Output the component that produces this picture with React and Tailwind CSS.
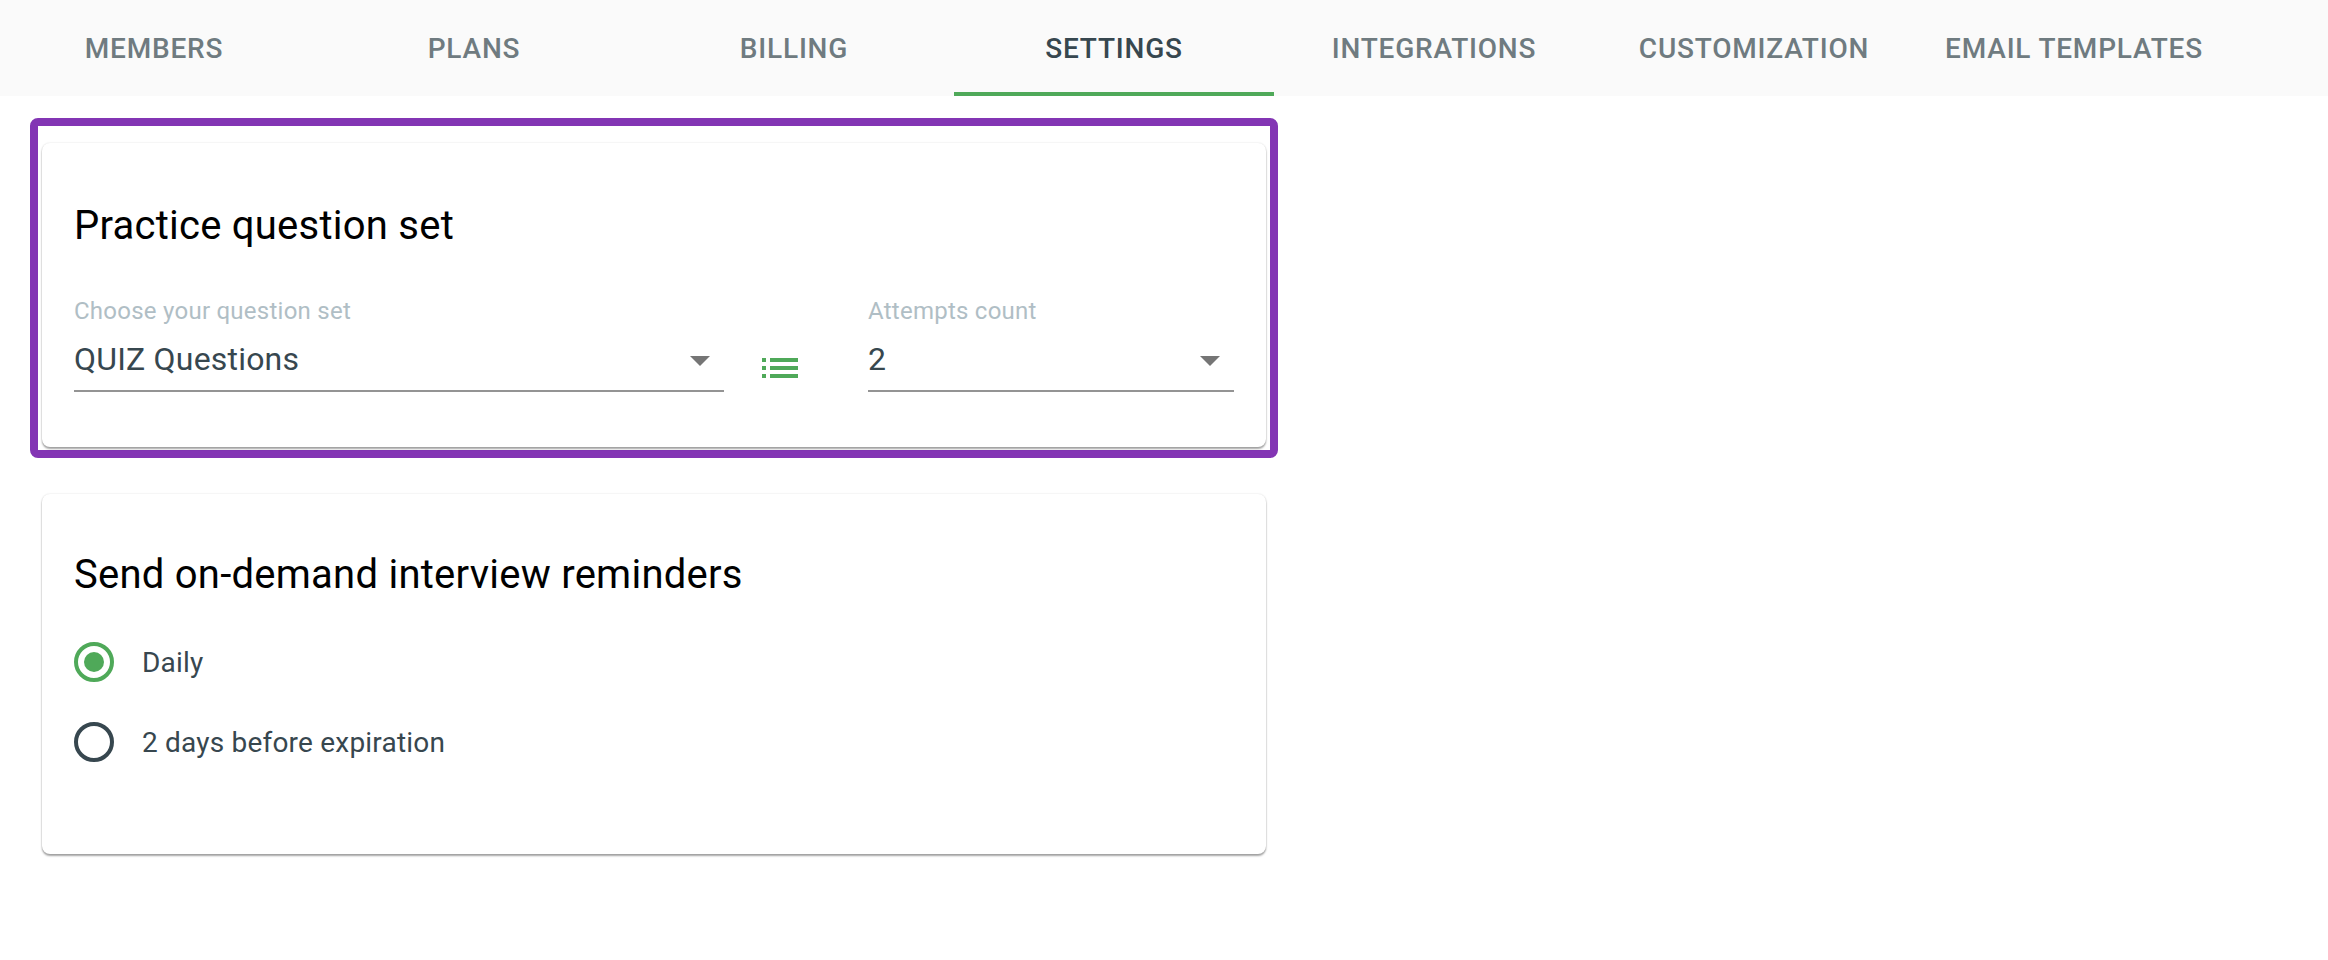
import React from 'react';

const tabs = ['MEMBERS', 'PLANS', 'BILLING', 'SETTINGS', 'INTEGRATIONS', 'CUSTOMIZATION', 'EMAIL TEMPLATES'];

const Arrow = () => (
    <svg width="48" height="48" viewBox="0 0 24 24" className="absolute right-0 top-[-2px] fill-[#757575]">
        <path d="M7 10l5 5 5-5z" />
    </svg>
);

const Select = ({ label, value, className }) => (
    <div className={className}>
        <div className="text-[24px] leading-[28px] tracking-[0.25px] text-[#b0bec5]">{label}</div>
        <div className="relative mt-[13px] h-[54px] border-b-2 border-[#949494] text-[32px] leading-[42px] tracking-[0.2px] text-[#37474f]">
            {value}
            <Arrow />
        </div>
    </div>
);

const Radio = ({ label, checked }) => (
    <div className="flex h-[40px] items-center">
        <div className={`flex h-[40px] w-[40px] items-center justify-center rounded-full border-4 ${checked ? 'border-[#4fa959]' : 'border-[#37474f]'}`}>
            {checked && <div className="h-[20px] w-[20px] rounded-full bg-[#4fa959]" />}
        </div>
        <span className="ml-[28px] pt-[2px] text-[28px] tracking-[0.2px] text-[#37474f]">{label}</span>
    </div>
);

const cardClass = 'rounded-[8px] bg-white px-8 shadow-[0_0_2px_rgba(0,0,0,0.14),0_2px_2px_rgba(0,0,0,0.35)]';

export default function App() {
    return (
        <div className="min-h-[960px] bg-white font-['Roboto',sans-serif]">
            <div className="flex h-24 bg-[#fafafa]">
                <div className="-ml-[6px] flex">
                    {tabs.map((tab) => (
                        <div
                            key={tab}
                            className={`flex h-24 w-[320px] items-center justify-center border-b-4 pt-[6px] text-[28px] font-medium tracking-[0.8px] ${tab === 'SETTINGS' ? 'border-[#4fa959] text-[#37474f]' : 'border-transparent text-[#6f7b80]'}`}
                        >
                            {tab}
                        </div>
                    ))}
                </div>
            </div>

            <div className="ml-[30px] mt-[22px] h-[340px] w-[1248px] rounded-[8px] border-8 border-[#8335b4] px-1 pt-[17px]">
                <div className={`${cardClass} h-[304px] pt-[58px]`}>
                    <h2 className="text-[40px] leading-[50px] tracking-[0.25px] text-black">Practice question set</h2>
                    <div className="mt-[46px] flex">
                        <Select label="Choose your question set" value="QUIZ Questions" className="w-[650px]" />
                        <svg width="48" height="48" viewBox="0 0 24 24" className="ml-[32px] mt-[47px] fill-[#4fa959]">
                            <path d="M3 13h2v-2H3v2zm0 4h2v-2H3v2zm0-8h2V7H3v2zm4 4h14v-2H7v2zm0 4h14v-2H7v2zM7 7v2h14V7H7z" />
                        </svg>
                        <Select label="Attempts count" value="2" className="ml-[64px] w-[366px]" />
                    </div>
                </div>
            </div>

            <div className={`${cardClass} ml-[42px] mt-[36px] h-[360px] w-[1224px] pt-[56px]`}>
                <h2 className="text-[40px] leading-[50px] tracking-[0.25px] text-black">Send on-demand interview reminders</h2>
                <div className="mt-[42px] flex flex-col gap-[40px]">
                    <Radio label="Daily" checked />
                    <Radio label="2 days before expiration" />
                </div>
            </div>
        </div>
    );
}
